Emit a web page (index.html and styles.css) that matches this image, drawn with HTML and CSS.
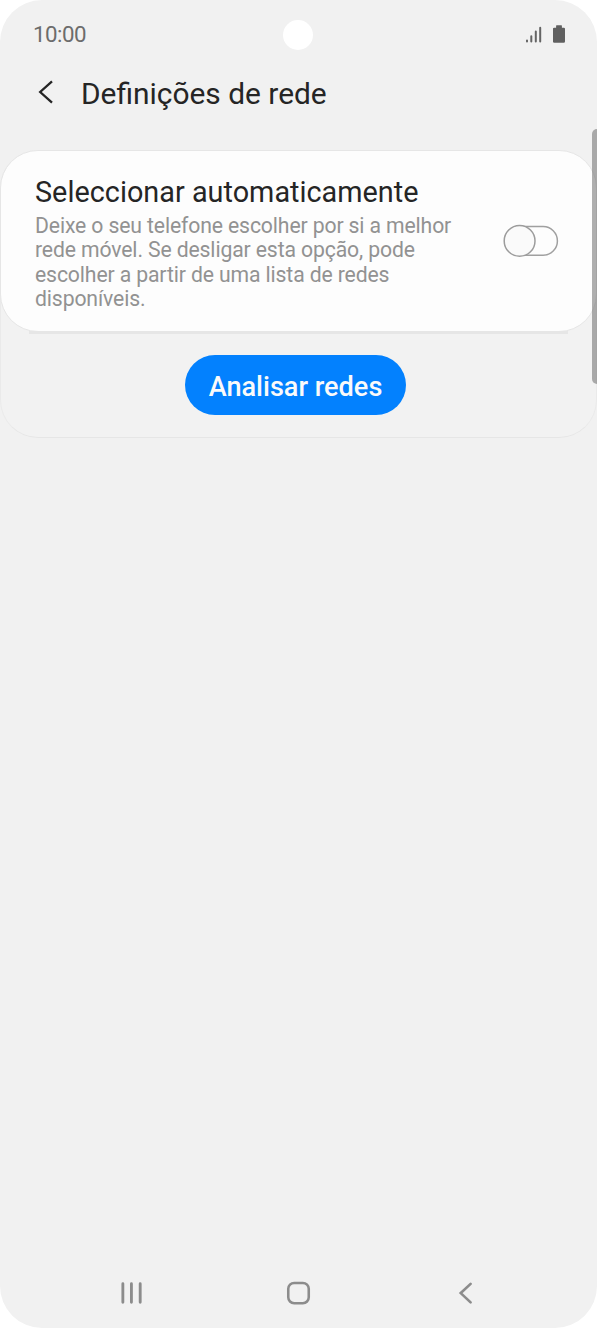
FILE: index.html
```html
<!DOCTYPE html>
<html lang="pt">
<head>
<meta charset="utf-8">
<title>Definições de rede</title>
<link rel="stylesheet" href="styles.css">
</head>
<body>
<div class="phone">
  <div class="status">
    <span class="time">10:00</span>
    <span class="camera"></span>
    <svg class="status-icons" width="42" height="22" viewBox="0 0 42 22" aria-hidden="true">
      <g stroke="#646464" stroke-width="2" stroke-linecap="round">
        <path d="M3 16.6v1M7.3 12.3v5.3M11.8 7.6v10M16.2 3.8v13.8"/>
      </g>
      <path fill="#606060" d="M32.6 1.3h4.8q.5 0 .5.5v1.9h2q1.1 0 1.1 1v12.9q0 1.2-1.2 1.2h-9.6q-1.2 0-1.2-1.2V4.7q0-1 1.1-1h2V1.8q0-.5.5-.5z"/>
    </svg>
  </div>
  <header class="header">
    <svg class="back" width="16" height="24" viewBox="0 0 16 24" aria-hidden="true"><path d="M14 1.4 2.2 12 14 22.6" fill="none" stroke="#252525" stroke-width="2.3"/></svg>
    <h1 class="title">Definições de rede</h1>
  </header>
  <main class="panel">
    <section class="card">
      <div class="copy">
        <h2 class="label">Seleccionar automaticamente</h2>
        <p class="desc">Deixe o seu telefone escolher por si a melhor<br>rede móvel. Se desligar esta opção, pode<br>escolher a partir de uma lista de redes<br>disponíveis.</p>
      </div>
      <svg class="switch" width="56" height="34" viewBox="0 0 56 34" role="switch" aria-checked="false">
        <rect x="1.7" y="2.6" width="52.7" height="28.6" rx="14.3" fill="#fdfdfd" stroke="#a0a0a0" stroke-width="1.5"/>
        <circle cx="16.6" cy="16.9" r="15.4" fill="#fafafa" stroke="#9c9c9c" stroke-width="1.5"/>
      </svg>
    </section>
    <div class="divider"></div>
    <button class="scan">Analisar redes</button>
  </main>
  <div class="scrollbar"></div>
  <nav class="nav">
    <svg width="24" height="26" viewBox="0 0 24 26"><path d="M2.9 3.5v19M11.6 3.5v19M20.5 3.5v19" stroke="#8c8c8c" stroke-width="2.9" stroke-linecap="round"/></svg>
    <svg class="home" width="26" height="26" viewBox="0 0 26 26"><rect x="2.3" y="2.8" width="20.8" height="20.6" rx="6" fill="none" stroke="#8c8c8c" stroke-width="2.6"/></svg>
    <svg width="16" height="26" viewBox="0 0 16 26"><path d="M12.8 3.7 2.8 13.1l10 9.4" fill="none" stroke="#8c8c8c" stroke-width="2.7" stroke-linecap="round"/></svg>
  </nav>
</div>
</body>
</html>
```
FILE: styles.css
```css
* { box-sizing: border-box; }
body { margin: 0; background: #fff; font-family: Roboto, sans-serif; }
.phone {
  position: relative;
  display: flex;
  flex-direction: column;
  width: 597px;
  height: 1328px;
  background: #f1f1f1;
  border-radius: 42px;
  overflow: hidden;
}
.status {
  display: grid;
  grid-template-columns: 250px 30px 1fr;
  align-items: center;
  height: 70px;
  padding: 0 31px 0 33px;
}
.time { margin-top: -2px; color: #6c6c6c; font-size: 22.3px; line-height: 30px; letter-spacing: -.5px; }
.camera { width: 30px; height: 30px; border-radius: 50%; background: #fff; }
.status-icons { justify-self: end; margin-top: -1px; }
.header { display: flex; align-items: center; height: 80px; padding: 0 38px 33px; }
.back { flex: none; margin: -3px 27px 0 0; }
.title { margin: 0; color: #252525; font-size: 29.9px; font-weight: 400; line-height: 40px; white-space: nowrap; }
.panel {
  height: 288px;
  border: 1px solid #e6e6e6;
  border-top: 0;
  border-left-color: #eaeaea;
  border-right-color: #eaeaea;
  border-radius: 38px;
  background: #f2f2f2;
}
.card {
  display: flex;
  justify-content: space-between;
  height: 182px;
  margin: 0 -1px;
  padding: 23px 37px 0 35px;
  border: 1px solid #e6e6e6;
  border-radius: 38px;
  background: #fdfdfd;
}
.copy { margin-left: -1px; }
.label { margin: 0; color: #252525; font-size: 28.8px; font-weight: 400; line-height: 36px; letter-spacing: .02px; white-space: nowrap; }
.desc { margin: 4px 0 0; color: #929292; font-size: 21.2px; line-height: 24.4px; letter-spacing: -.13px; white-space: nowrap; }
.switch { flex: none; margin-top: 50px; }
.divider { height: 3px; margin: -1px 28px 0; background: #e6e6e6; }
.scan {
  display: block;
  width: 221px;
  height: 60px;
  margin: 21px 0 0 184px;
  padding: 3px 0 0;
  border: 0;
  border-radius: 30px;
  background: #0381fe;
  color: #fafafa;
  font: 500 27.1px/32px Roboto, sans-serif;
  white-space: nowrap;
}
.scrollbar {
  position: absolute;
  top: 129px;
  right: 0;
  width: 5.5px;
  height: 255px;
  border-radius: 5px 0 0 5px;
  background: rgba(90, 90, 90, .48);
}
.nav {
  display: flex;
  align-items: center;
  margin-top: auto;
  height: 70px;
  padding: 0 123px 0 120px;
}
.home { margin: 0 147px 0 142px; }
```
